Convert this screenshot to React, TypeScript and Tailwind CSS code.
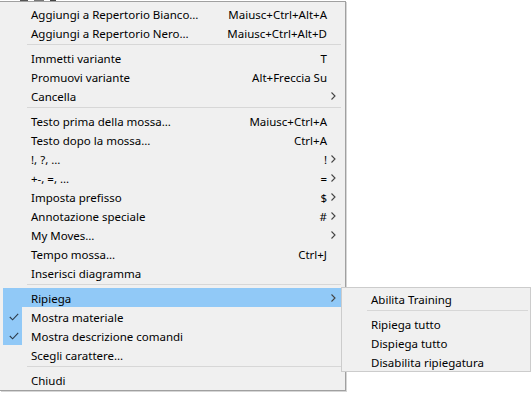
import React from "react";

type Item =
  | { sep: true }
  | { sep?: false; l: string; s?: string; arrow?: boolean; hl?: boolean; check?: boolean };

const main: Item[] = [
  { l: "Aggiungi a Repertorio Bianco…", s: "Maiusc+Ctrl+Alt+A" },
  { l: "Aggiungi a Repertorio Nero…", s: "Maiusc+Ctrl+Alt+D" },
  { sep: true },
  { l: "Immetti variante", s: "T" },
  { l: "Promuovi variante", s: "Alt+Freccia Su" },
  { l: "Cancella", arrow: true },
  { sep: true },
  { l: "Testo prima della mossa…", s: "Maiusc+Ctrl+A" },
  { l: "Testo dopo la mossa…", s: "Ctrl+A" },
  { l: "!, ?, …", s: "!", arrow: true },
  { l: "+-, =, …", s: "=", arrow: true },
  { l: "Imposta prefisso", s: "$", arrow: true },
  { l: "Annotazione speciale", s: "#", arrow: true },
  { l: "My Moves…", arrow: true },
  { l: "Tempo mossa…", s: "Ctrl+J" },
  { l: "Inserisci diagramma" },
  { sep: true },
  { l: "Ripiega", arrow: true, hl: true },
  { l: "Mostra materiale", check: true },
  { l: "Mostra descrizione comandi", check: true },
  { l: "Scegli carattere…" },
  { sep: true },
  { l: "Chiudi" },
];

const sub: Item[] = [
  { l: "Abilita Training" },
  { sep: true },
  { l: "Ripiega tutto" },
  { l: "Dispiega tutto" },
  { l: "Disabilita ripiegatura" },
];

function Arrow() {
  return (
    <svg width="5" height="8" viewBox="0 0 5 8" className="block">
      <polyline points="0.5,0.5 4,4 0.5,7.5" fill="none" stroke="#444" strokeWidth="1.1" />
    </svg>
  );
}

function Check() {
  return (
    <svg width="10" height="8" viewBox="0 0 10 8" className="block">
      <polyline points="0.8,4 3.6,6.8 9.2,0.8" fill="none" stroke="#2b3a4a" strokeWidth="1.1" />
    </svg>
  );
}

function Row({ it }: { it: Item }) {
  if (it.sep) {
    return (
      <div className="h-[6px] pt-[2px] pl-[24px]">
        <div className="h-px bg-[#d7d7d7]" />
      </div>
    );
  }
  return (
    <div className={`flex h-[19px] items-center ${it.hl ? "bg-[#91c9f7]" : ""}`}>
      <div
        className={`flex h-[19px] w-[19px] shrink-0 items-center justify-center pl-[3px] ${
          it.check ? "bg-[#91c9f7]" : ""
        }`}
      >
        {it.check ? <Check /> : null}
      </div>
      <div className="ml-[9px] flex-1 whitespace-nowrap pt-[1px] leading-[19px]">{it.l}</div>
      {it.s ? <div className="whitespace-nowrap pt-[1px] leading-[19px]">{it.s}</div> : null}
      <div className="flex w-[14px] shrink-0 justify-start pl-[4px]">{it.arrow ? <Arrow /> : null}</div>
    </div>
  );
}

export default function App() {
  return (
    <div
      className="relative h-[394px] w-[532px] overflow-hidden bg-white text-[11.5px] text-black"
      style={{ fontFamily: '"Noto Sans", sans-serif' }}
    >
      <div className="absolute left-0 top-0 flex h-[2px] w-[346px] gap-[6px] pl-[20px]">
        <div className="h-[2px] w-[8px] bg-[#555]" />
        <div className="h-[2px] w-[10px] bg-[#777]" />
        <div className="h-[2px] w-[6px] bg-[#444]" />
      </div>
      <div className="absolute left-0 top-[1px] w-[346px] border-y border-r border-[#a0a0a0] bg-[#f0f0f0] pb-[1px] pl-[3px] pr-[4px] pt-[2px] shadow-[1px_1px_0_#d6d6d6]">
        {main.map((it, i) => (
          <Row key={i} it={it} />
        ))}
      </div>
      <div className="absolute left-[341px] top-[287px] w-[190px] border border-[#cccccc] bg-[#f0f0f0] pb-[0px] pl-[1px] pr-[2px] pt-[1px]">
        {sub.map((it, i) => (
          <Row key={i} it={it} />
        ))}
      </div>
    </div>
  );
}
